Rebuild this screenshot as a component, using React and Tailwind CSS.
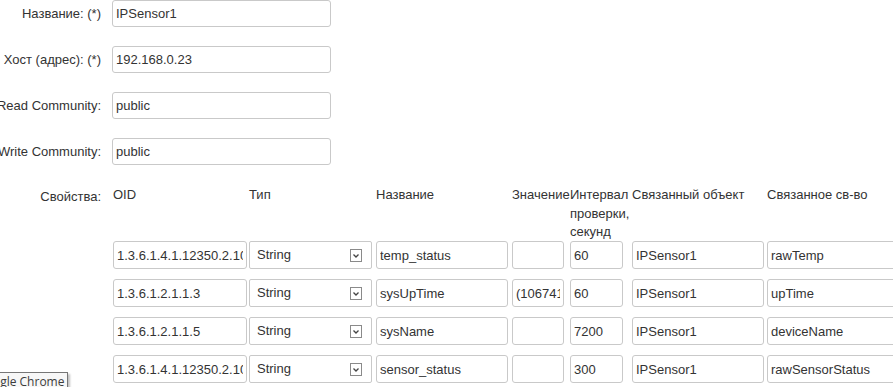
import React from 'react';

const fields = [
  { label: 'Название: (*)', value: 'IPSensor1' },
  { label: 'Хост (адрес): (*)', value: '192.168.0.23' },
  { label: 'Read Community:', value: 'public' },
  { label: 'Write Community:', value: 'public' },
];

const rows = [
  { oid: '1.3.6.1.4.1.12350.2.10.1.1', type: 'String', name: 'temp_status', value: '', interval: '60', obj: 'IPSensor1', prop: 'rawTemp' },
  { oid: '1.3.6.1.2.1.1.3', type: 'String', name: 'sysUpTime', value: '(10674100) 1 day', interval: '60', obj: 'IPSensor1', prop: 'upTime' },
  { oid: '1.3.6.1.2.1.1.5', type: 'String', name: 'sysName', value: '', interval: '7200', obj: 'IPSensor1', prop: 'deviceName' },
  { oid: '1.3.6.1.4.1.12350.2.10.1.2', type: 'String', name: 'sensor_status', value: '', interval: '300', obj: 'IPSensor1', prop: 'rawSensorStatus' },
];

const cols = 'grid grid-cols-[136px_127px_136px_58px_62px_135px_130px]';

function Field({ value, className }) {
  return (
    <input
      type="text"
      defaultValue={value}
      className={`border border-[#c9c9c9] rounded-[3px] bg-white px-[3px] text-[13px] text-[#333] outline-none ${className}`}
    />
  );
}

function Select({ value }) {
  return (
    <div className="h-[28px] w-[123px] border border-[#c9c9c9] rounded-[2px] bg-white flex items-center pl-[7px] pr-[9px] text-[13px] text-[#333]">
      <span className="flex-1">{value}</span>
      <svg width="12" height="13" viewBox="0 0 12 13">
        <rect x="0.5" y="0.5" width="11" height="12" fill="#fff" stroke="#8a8a8a" />
        <path d="M3.5 5.5 L6 8 L8.5 5.5" fill="none" stroke="#444" strokeWidth="1.3" />
      </svg>
    </div>
  );
}

export default function App() {
  return (
    <div className="relative w-[893px] h-[387px] overflow-hidden bg-white text-[13px] text-[#333] font-['Liberation_Sans',Arial,sans-serif]">
      <div className="flex flex-col gap-[19px]">
        {fields.map((f) => (
          <div key={f.label} className="flex items-center">
            <label className="w-[101px] shrink-0 text-right whitespace-nowrap flex justify-end">{f.label}</label>
            <Field value={f.value} className="ml-[11px] w-[219px] h-[27px]" />
          </div>
        ))}
      </div>

      <div className="flex items-start mt-[20px]">
        <div className="w-[101px] shrink-0 text-right leading-[19px] pt-[2px]">Свойства:</div>
        <div className="ml-[12px] flex flex-col">
          <div className={`${cols} h-[56px] leading-[18.5px] pt-[1px]`}>
            <div>OID</div>
            <div>Тип</div>
            <div>Название</div>
            <div className="whitespace-nowrap">Значение</div>
            <div>Интервал проверки, секунд</div>
            <div className="whitespace-nowrap">Связанный объект</div>
            <div className="whitespace-nowrap">Связанное св-во</div>
          </div>
          <div className="flex flex-col gap-[10px]">
            {rows.map((r, i) => (
              <div key={i} className={cols}>
                <Field value={r.oid} className="w-[134px] h-[28px]" />
                <Select value={r.type} />
                <Field value={r.name} className="w-[132px] h-[28px]" />
                <Field value={r.value} className="w-[52px] h-[28px]" />
                <Field value={r.interval} className="w-[53px] h-[28px]" />
                <Field value={r.obj} className="w-[132px] h-[28px]" />
                <Field value={r.prop} className="w-[132px] h-[28px]" />
              </div>
            ))}
          </div>
        </div>
      </div>

      <div className="absolute left-[-27px] top-[372px] border border-[#767676] bg-[#f7f7f7] px-[3px] pt-[1px] h-[20px] text-[12px] leading-[16px] text-[#3c3c3c] shadow-[2px_2px_2px_rgba(0,0,0,0.25)] font-['Open_Sans',sans-serif] whitespace-nowrap">
        Google Chrome
      </div>
    </div>
  );
}
